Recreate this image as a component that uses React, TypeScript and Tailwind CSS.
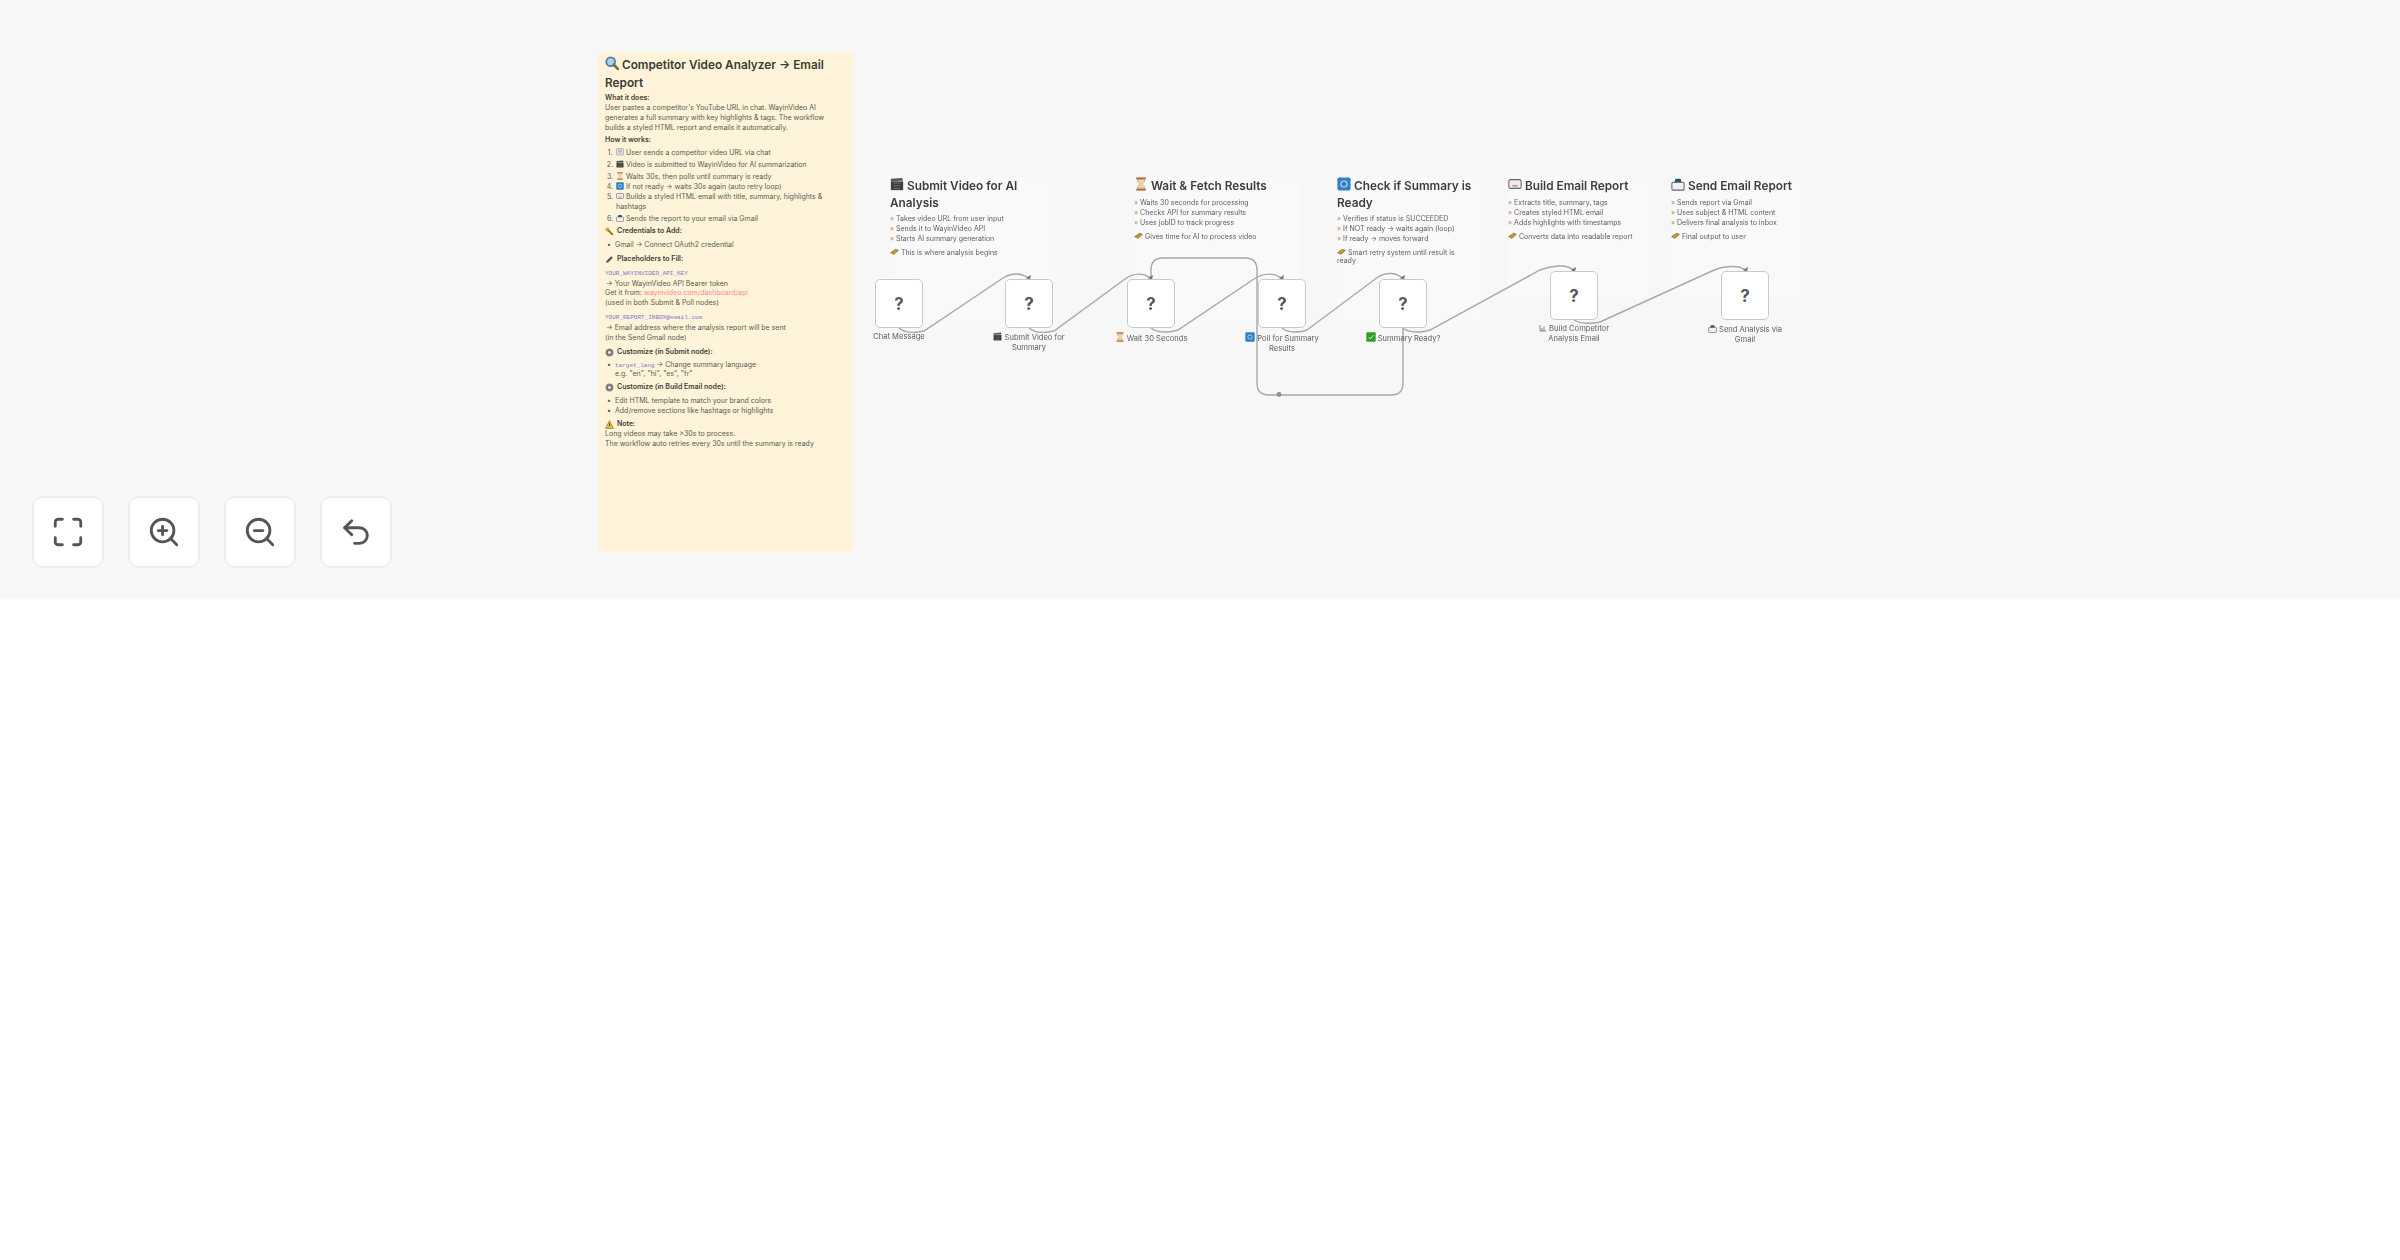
import React from "react";
import { Maximize, ZoomIn, ZoomOut, Undo2 } from "lucide-react";

type I = { s?: number };
const Svg = ({ s = 8, children }: { s?: number; children: React.ReactNode }) => (
  <svg width={s} height={s} viewBox="0 0 16 16" className="inline-block align-[-1px] shrink-0">{children}</svg>
);
const Search = ({ s }: I) => (
  <Svg s={s}><circle cx="6.5" cy="6.5" r="5" fill="#a9d3ee" stroke="#4b7fa6" strokeWidth="2" /><path d="M10 10l5 5" stroke="#7a6a45" strokeWidth="3" strokeLinecap="round" /></Svg>
);
const Clapper = ({ s }: I) => (
  <Svg s={s}><rect x="1" y="5" width="14" height="10" fill="#3c3c3c" /><path d="M1 2l13-1 1 3L1 5z" fill="#555" /><path d="M4 7h8M4 10h8M4 13h8" stroke="#777" strokeWidth="1" /></Svg>
);
const Hourglass = ({ s }: I) => (
  <Svg s={s}><rect x="2.5" y="0.5" width="11" height="2.2" fill="#b5673b" /><rect x="2.5" y="13.3" width="11" height="2.2" fill="#b5673b" /><path d="M4 3h8v2l-3 3 3 3v2H4v-2l3-3-3-3z" fill="#f2d9a2" stroke="#8a8a8a" strokeWidth=".6" /><path d="M6 12h4v1H6z" fill="#e8a33d" /></Svg>
);
const Refresh = ({ s }: I) => (
  <Svg s={s}><rect x="0.5" y="0.5" width="15" height="15" rx="2" fill="#2f7fc4" /><circle cx="8" cy="8" r="3.5" fill="none" stroke="#cfe6f7" strokeWidth="1.2" /></Svg>
);
const Check = ({ s }: I) => (
  <Svg s={s}><rect x="0.5" y="0.5" width="15" height="15" rx="1.5" fill="#2f9e22" /><path d="M4 8l3 3 5-6" fill="none" stroke="#d6f2cf" strokeWidth="1.6" /></Svg>
);
const Mail = ({ s }: I) => (
  <Svg s={s}><rect x="1" y="3" width="14" height="10" rx="2" fill="#eee" stroke="#666" strokeWidth="1.2" /><path d="M5 9h6v2H5z" fill="#d98a76" /></Svg>
);
const Outbox = ({ s }: I) => (
  <Svg s={s}><rect x="1" y="6" width="14" height="9" rx="1.5" fill="#f0f0f0" stroke="#666" strokeWidth="1.2" /><path d="M4 6l1-4h6l1 4z" fill="#2c5568" /></Svg>
);
const Chat = ({ s }: I) => (
  <Svg s={s}><rect x="1" y="1" width="14" height="13" rx="1" fill="#e5e5e5" stroke="#888" /><path d="M4 4h8M4 7h8M4 10h8" stroke="#888" /></Svg>
);
const Chart = ({ s }: I) => (
  <Svg s={s}><path d="M2 2v12h12M6 8v6M10 5v9" fill="none" stroke="#666" strokeWidth="1.5" /></Svg>
);
const Key = ({ s }: I) => (
  <Svg s={s}><circle cx="4.5" cy="4.5" r="3.5" fill="#d9a520" /><path d="M6 6l8 8" stroke="#8c6a1a" strokeWidth="3" /></Svg>
);
const Pencil = ({ s }: I) => (
  <Svg s={s}><path d="M2 14l1-4 8-8 3 3-8 8z" fill="#555" /></Svg>
);
const Gear = ({ s }: I) => (
  <Svg s={s}><circle cx="8" cy="8" r="7" fill="#8b8b8b" /><circle cx="8" cy="8" r="4" fill="#ddd" stroke="#444" strokeWidth="1.4" /></Svg>
);
const Warn = ({ s }: I) => (
  <Svg s={s}><path d="M8 1l7 14H1z" fill="#e4c21c" stroke="#444" strokeWidth=".8" /><path d="M8 6v5" stroke="#333" strokeWidth="1.5" /></Svg>
);
const Memo = ({ s }: I) => (
  <Svg s={s}><path d="M1 10l9-6 5 2-8 7z" fill="#c99a1e" stroke="#5e5430" strokeWidth="1" /></Svg>
);

const Mono = ({ children }: { children: React.ReactNode }) => (
  <span className="font-['Liberation_Mono',monospace] text-[6px] text-[#7f74c8]">{children}</span>
);

const Head = ({ icon, children, className = "" }: { icon?: React.ReactNode; children: React.ReactNode; className?: string }) => (
  <div className={`font-semibold text-[#3f3c35] flex items-center gap-[3px] ${className}`}>
    {icon}
    <span>{children}</span>
  </div>
);

const steps: [React.ReactNode, string][] = [
  [<Chat s={8} />, "User sends a competitor video URL via chat"],
  [<Clapper s={8} />, "Video is submitted to WayinVideo for AI summarization"],
  [<Hourglass s={8} />, "Waits 30s, then polls until summary is ready"],
  [<Refresh s={8} />, "If not ready → waits 30s again (auto retry loop)"],
  [<Mail s={8} />, "Builds a styled HTML email with title, summary, highlights & hashtags"],
  [<Outbox s={8} />, "Sends the report to your email via Gmail"],
];

const Bullet = ({ children }: { children: React.ReactNode }) => (
  <div className="flex">
    <span className="w-[10px] pl-[2px] shrink-0">•</span>
    <span className="flex-1">{children}</span>
  </div>
);

const YellowNote = () => (
  <div className="absolute left-[598px] top-[52px] w-[255px] h-[500px] bg-[#fff4da] rounded-[3px] pl-[7px] pr-[16px] py-[4px] text-[7px] leading-[10px] text-[#5c5850]">
    <div className="text-[11.8px] leading-[18px] font-semibold text-[#3d3a33]">
      <Search s={14} /> Competitor Video Analyzer -&gt; Email Report
    </div>
    <Head className="mt-[1px]">What it does:</Head>
    <div>User pastes a competitor's YouTube URL in chat. WayinVideo AI generates a full summary with key highlights &amp; tags. The workflow builds a styled HTML report and emails it automatically.</div>
    <Head className="mt-[2px]">How it works:</Head>
    <ol className="mt-[3px]">
      {steps.map(([ic, t], i) => (
        <li key={i} className={`flex ${i === 1 || i === 2 ? "mt-[2px]" : ""} ${i === 5 ? "mt-[2px]" : ""}`}>
          <span className="w-[10px] shrink-0 text-center">{i + 1}.</span>
          <span className="flex-1 pl-[1px]">{ic} {t}</span>
        </li>
      ))}
    </ol>
    <Head className="mt-[2px]" icon={<Key s={9} />}>Credentials to Add:</Head>
    <div className="mt-[4px]"><Bullet>Gmail → Connect OAuth2 credential</Bullet></div>
    <Head className="mt-[4px]" icon={<Pencil s={9} />}>Placeholders to Fill:</Head>
    <div className="mt-[4px]"><Mono>YOUR_WAYINVIDEO_API_KEY</Mono></div>
    <div className="pl-[1px]">→ Your WayinVideo API Bearer token</div>
    <div className="-mt-[1px]">Get it from: <span className="text-[#f58d90]">wayinvideo.com/dashboard/api</span></div>
    <div>(used in both Submit &amp; Poll nodes)</div>
    <div className="mt-[4px]"><Mono>YOUR_REPORT_INBOX@email.com</Mono></div>
    <div className="pl-[1px]">→ Email address where the analysis report will be sent</div>
    <div>(in the Send Gmail node)</div>
    <Head className="mt-[4px]" icon={<Gear s={9} />}>Customize (in Submit node):</Head>
    <div className="mt-[4px] leading-[8px]"><Bullet><Mono>target_lang</Mono> → Change summary language<br />e.g. "en", "hi", "es", "fr"</Bullet></div>
    <Head className="mt-[4px]" icon={<Gear s={9} />}>Customize (in Build Email node):</Head>
    <div className="mt-[4px]"><Bullet>Edit HTML template to match your brand colors</Bullet><Bullet>Add/remove sections like hashtags or highlights</Bullet></div>
    <Head className="mt-[3px]" icon={<Warn s={9} />}>Note:</Head>
    <div>Long videos may take &gt;30s to process.</div>
    <div>The workflow auto retries every 30s until the summary is ready</div>
  </div>
);

type Note = { x: number; w: number; h: number; icon: React.ReactNode; title: string; lines: string[]; memo: string };
const notes: Note[] = [
  { x: 890, w: 165, h: 150, icon: <Clapper s={14} />, title: "Submit Video for AI Analysis", lines: ["Takes video URL from user input", "Sends it to WayinVideo API", "Starts AI summary generation"], memo: "This is where analysis begins" },
  { x: 1134, w: 165, h: 150, icon: <Hourglass s={14} />, title: "Wait & Fetch Results", lines: ["Waits 30 seconds for processing", "Checks API for summary results", "Uses jobID to track progress"], memo: "Gives time for AI to process video" },
  { x: 1337, w: 145, h: 150, icon: <Refresh s={14} />, title: "Check if Summary is Ready", lines: ["Verifies if status is SUCCEEDED", "If NOT ready → waits again (loop)", "If ready → moves forward"], memo: "Smart retry system until result is ready" },
  { x: 1508, w: 140, h: 120, icon: <Mail s={14} />, title: "Build Email Report", lines: ["Extracts title, summary, tags", "Creates styled HTML email", "Adds highlights with timestamps"], memo: "Converts data into readable report" },
  { x: 1671, w: 130, h: 120, icon: <Outbox s={14} />, title: "Send Email Report", lines: ["Sends report via Gmail", "Uses subject & HTML content", "Delivers final analysis to inbox"], memo: "Final output to user" },
];

const StickyNote = ({ n }: { n: Note }) => (
  <div style={{ left: n.x, width: n.w, height: n.h }} className="absolute top-[177px] bg-[#f9f9f9] rounded-[3px] text-[7px] leading-[10px] text-[#5e5e66]">
    <div className="text-[11.8px] leading-[16.5px] font-semibold text-[#3d3d44]">
      {n.icon} {n.title}
    </div>
    <div className="mt-[3px]">
      {n.lines.map((l) => (
        <div key={l}><span className="text-[#c08a50]">»</span> {l}</div>
      ))}
    </div>
    <div className="mt-[3px] leading-[8px] max-w-[132px]"><Memo s={9} /> {n.memo}</div>
  </div>
);

type FN = { x: number; y: number; w: number; icon?: React.ReactNode; label: string };
const flowNodes: FN[] = [
  { x: 875, y: 279, w: 70, label: "Chat Message" },
  { x: 1005, y: 279, w: 72, icon: <Clapper s={9} />, label: "Submit Video for Summary" },
  { x: 1127, y: 279, w: 82, icon: <Hourglass s={10} />, label: "Wait 30 Seconds" },
  { x: 1258, y: 279, w: 84, icon: <Refresh s={10} />, label: "Poll for Summary Results" },
  { x: 1379, y: 279, w: 90, icon: <Check s={10} />, label: "Summary Ready?" },
  { x: 1550, y: 271, w: 84, icon: <Chart s={8} />, label: "Build Competitor Analysis Email" },
  { x: 1721, y: 271, w: 84, icon: <Outbox s={9} />, label: "Send Analysis via Gmail" },
];

const FlowNode = ({ n }: { n: FN }) => (
  <div style={{ left: n.x, top: n.y }} className="absolute w-[48px]">
    <div className="h-[49px] rounded-[5px] bg-white border-[1.5px] border-[#c9c9c9] flex items-center justify-center text-[#55565e] text-[17px] font-bold pt-[2px]">?</div>
    <div style={{ width: n.w, marginLeft: (48 - n.w) / 2 }} className="mt-[4px] text-center text-[7.6px] leading-[10px] text-[#5e5e66]">
      {n.icon} {n.label}
    </div>
  </div>
);

const edges = [
  "M899 328 C905 333 915 333 924 331 L1003 278 C1011 273 1022 272 1029 279",
  "M1029 328 C1035 333 1045 333 1054 331 L1125 279 C1133 273 1144 272 1151 279",
  "M1151 328 C1157 333 1170 333 1178 330 L1254 279 C1263 273 1275 272 1282 279",
  "M1282 328 C1288 333 1300 333 1307 330 L1378 277 C1386 272 1397 272 1403 279",
  "M1403 328 C1409 333 1422 333 1430 330 L1540 270 C1550 266 1568 263 1574 271",
  "M1574 320 C1580 324 1592 324 1600 322 L1712 271 C1722 266 1740 264 1746 271",
  "M1151 279 L1151 270 Q1151 258 1163 258 L1245 258 Q1257 258 1257 270 L1257 383 Q1257 395 1269 395 L1391 395 Q1403 395 1403 383 L1403 328",
];

const Edges = () => (
  <svg className="absolute inset-0 pointer-events-none" width="2400" height="599" fill="none">
    {edges.map((d) => (
      <path key={d} d={d} stroke="#a8a8a8" strokeWidth="1.4" />
    ))}
    <circle cx="1279" cy="394.5" r="2.4" fill="#8f8f8f" />
    {[[1029, 279], [1151, 279], [1282, 279], [1403, 279], [1574, 271], [1746, 271]].map(([x, y]) => (
      <path key={x} d={`M${x + 2} ${y - 4} l-1 5 -4 -2z`} fill="#777" />
    ))}
  </svg>
);

const controls = [Maximize, ZoomIn, ZoomOut, Undo2];

export default function App() {
  return (
    <div className="min-h-[1260px] bg-white font-['Inter','Liberation_Sans',sans-serif]">
      <div className="relative h-[599px] bg-[#f7f7f7] overflow-hidden">
        <div className="absolute inset-0 blur-[0.65px]">
          <YellowNote />
          {notes.map((n) => (
            <StickyNote key={n.title} n={n} />
          ))}
          <Edges />
          {flowNodes.map((n) => (
            <FlowNode key={n.label} n={n} />
          ))}
        </div>
        <div className="absolute left-[34px] top-[498px] flex gap-[28px] blur-[0.4px]">
          {controls.map((C, i) => (
            <button key={i} className="w-[68px] h-[68px] rounded-[8px] bg-white shadow-[0_0_3px_rgba(0,0,0,0.15)] flex items-center justify-center text-[#555]">
              <C size={34} strokeWidth={2} />
            </button>
          ))}
        </div>
      </div>
    </div>
  );
}
